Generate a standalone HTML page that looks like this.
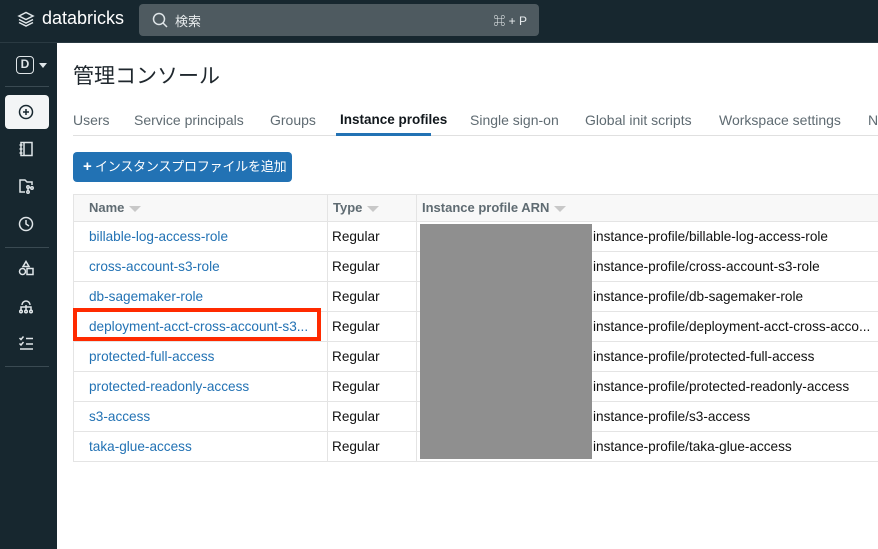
<!DOCTYPE html>
<html><head><meta charset="utf-8"><style>
*{box-sizing:border-box;margin:0;padding:0}
body{width:878px;height:549px;overflow:hidden;background:#fff;font-family:"Liberation Sans","Noto Sans CJK JP",sans-serif;position:relative}
.top{position:absolute;left:0;top:0;width:878px;height:43px;background:#17272f;border-bottom:1px solid #2a3a42}
.side{position:absolute;left:0;top:43px;width:57px;height:506px;background:#17272f}
.search{position:absolute;left:139px;top:4px;width:400px;height:32px;background:#4e5a60;border-radius:4px;color:#e8ecee;font-size:13px}
.ic{position:absolute;stroke:#dfe5e8;fill:none;stroke-width:1.5}
.tab{position:absolute;top:112px;font-size:14px;color:#5f6b72;white-space:nowrap}
table{position:absolute;left:73px;top:194px;border-collapse:collapse;font-size:13.6px;table-layout:fixed;width:820px}
td,th{height:30px;border:1px solid #e4e4e4;text-align:left;padding-left:15px;white-space:nowrap;overflow:hidden;padding-bottom:1px}
th{background:#f8f8f8;color:#5f6b72;height:27px;font-weight:bold;font-size:13px}
td.n{color:#2272b4;text-overflow:ellipsis}
td.t{padding-left:4px;color:#111}
td.a{padding-left:176px;color:#111}
th.t{padding-left:5px}
.tri{display:inline-block;width:0;height:0;border-left:6px solid transparent;border-right:6px solid transparent;border-top:6px solid #c8c8c8;margin-left:5px;vertical-align:middle}
</style></head><body>
<div class="top">
<svg class="ic" style="left:17px;top:11px" width="18" height="18" viewBox="0 0 18 18"><path d="M2 5l7-3.5 7 3.5-7 3.5z M2 8.5l7 3.5 7-3.5 M2 11.5l7 3.5 7-3.5"/></svg>
<div style="position:absolute;left:42px;top:8px;color:#fff;font-size:18px">databricks</div>
<div class="search">
<svg class="ic" style="left:13px;top:8px" width="16" height="16" viewBox="0 0 16 16"><circle cx="7" cy="7" r="5.5"/><path d="M11 11l4 4"/></svg>
<span style="position:absolute;left:36px;top:7px">検索</span>
<span style="position:absolute;right:12px;top:8px;font-size:12px">⌘ + P</span></div>
</div>
<div class="side">
<div style="position:absolute;left:16px;top:13px;width:18px;height:18px;border:1.5px solid #dfe5e8;border-radius:4px;color:#dfe5e8;font-size:12px;font-weight:bold;text-align:center;line-height:15px">D</div>
<div style="position:absolute;left:39px;top:20px;border-left:4px solid transparent;border-right:4px solid transparent;border-top:5px solid #dfe5e8"></div>
<div style="position:absolute;left:5px;top:43px;width:44px;height:1px;background:#3a4a52"></div>
<div style="position:absolute;left:5px;top:52px;width:44px;height:34px;background:#f3f5f6;border-radius:4px"></div>
<svg style="position:absolute;left:18px;top:61px" width="16" height="16" viewBox="0 0 16 16" fill="none" stroke="#17272f" stroke-width="1.5"><circle cx="8" cy="8" r="6.5"/><path d="M8 5v6M5 8h6"/></svg>
<svg class="ic" style="left:18px;top:98px" width="16" height="16" viewBox="0 0 16 16"><rect x="3" y="1.5" width="11" height="13"/><path d="M6 1.5v13M1.5 4h3M1.5 8h3M1.5 12h3"/></svg>
<svg class="ic" style="left:18px;top:135px" width="16" height="16" viewBox="0 0 16 16"><path d="M7 14H2V2h5l2 2h5v3"/><circle cx="10" cy="9" r="1.2"/><circle cx="14" cy="10" r="1.2"/><circle cx="10" cy="14" r="1.2"/><path d="M10 10v3M11 9.5l2 .3"/></svg>
<svg class="ic" style="left:18px;top:173px" width="16" height="16" viewBox="0 0 16 16"><circle cx="8" cy="8" r="6.5"/><path d="M8 4v4l3 2"/></svg>
<div style="position:absolute;left:5px;top:204px;width:44px;height:1px;background:#3a4a52"></div>
<svg class="ic" style="left:18px;top:217px" width="16" height="16" viewBox="0 0 16 16"><path d="M8 1.5l3 5H5z"/><circle cx="4.5" cy="11.5" r="3"/><rect x="9" y="8.5" width="6" height="6"/></svg>
<svg class="ic" style="left:18px;top:255px" width="16" height="16" viewBox="0 0 16 16"><path d="M4 7a4 4 0 0 1 8 0M8 7v5M3 12V9h10v3"/><circle cx="3" cy="13.5" r="1.3"/><circle cx="8" cy="13.5" r="1.3"/><circle cx="13" cy="13.5" r="1.3"/></svg>
<svg class="ic" style="left:18px;top:292px" width="16" height="16" viewBox="0 0 16 16"><path d="M1.5 3l1.5 1.5 2.5-3M8 3.5h7M1.5 8.5l1.5 1.5 2.5-3M8 9h7M2 14h13"/></svg>
<div style="position:absolute;left:5px;top:323px;width:44px;height:1px;background:#3a4a52"></div>
</div>
<div style="position:absolute;left:73px;top:60px;font-size:21px;color:#1f272d">管理コンソール</div>
<span class="tab" style="left:73px">Users</span>
<span class="tab" style="left:134px">Service principals</span>
<span class="tab" style="left:270px">Groups</span>
<span class="tab" style="left:340px;color:#11171c;font-weight:bold;font-size:13.5px">Instance profiles</span>
<span class="tab" style="left:470px">Single sign-on</span>
<span class="tab" style="left:585px">Global init scripts</span>
<span class="tab" style="left:719px">Workspace settings</span>
<span class="tab" style="left:868px">N</span>
<div style="position:absolute;left:73px;top:135px;width:805px;height:1px;background:#e0e0e0"></div>
<div style="position:absolute;left:336px;top:133px;width:95px;height:3px;background:#2272b4"></div>
<div style="position:absolute;left:73px;top:152px;width:219px;height:30px;background:#2272b4;border-radius:4px;color:#fff;font-size:13px;line-height:30px;padding-left:10px;white-space:nowrap;letter-spacing:-0.2px"><b style="font-size:15px">+</b>&nbsp;インスタンスプロファイルを追加</div>
<table>
<colgroup><col style="width:254px"><col style="width:89px"><col style="width:477px"></colgroup>
<tr><th>Name<span class="tri"></span></th><th class="t">Type<span class="tri"></span></th><th class="t">Instance profile ARN<span class="tri"></span></th></tr>
<tr><td class="n">billable-log-access-role</td><td class="t">Regular</td><td class="a">instance-profile/billable-log-access-role</td></tr>
<tr><td class="n">cross-account-s3-role</td><td class="t">Regular</td><td class="a">instance-profile/cross-account-s3-role</td></tr>
<tr><td class="n">db-sagemaker-role</td><td class="t">Regular</td><td class="a">instance-profile/db-sagemaker-role</td></tr>
<tr><td class="n">deployment-acct-cross-account-s3...</td><td class="t">Regular</td><td class="a">instance-profile/deployment-acct-cross-acco...</td></tr>
<tr><td class="n">protected-full-access</td><td class="t">Regular</td><td class="a">instance-profile/protected-full-access</td></tr>
<tr><td class="n">protected-readonly-access</td><td class="t">Regular</td><td class="a">instance-profile/protected-readonly-access</td></tr>
<tr><td class="n">s3-access</td><td class="t">Regular</td><td class="a">instance-profile/s3-access</td></tr>
<tr><td class="n">taka-glue-access</td><td class="t">Regular</td><td class="a">instance-profile/taka-glue-access</td></tr>
</table>
<div style="position:absolute;left:420px;top:224px;width:172px;height:235px;background:#8f8f8f"></div>
<div style="position:absolute;left:73px;top:308px;width:248px;height:33px;border:4px solid #ff2a00"></div>
</body></html>
